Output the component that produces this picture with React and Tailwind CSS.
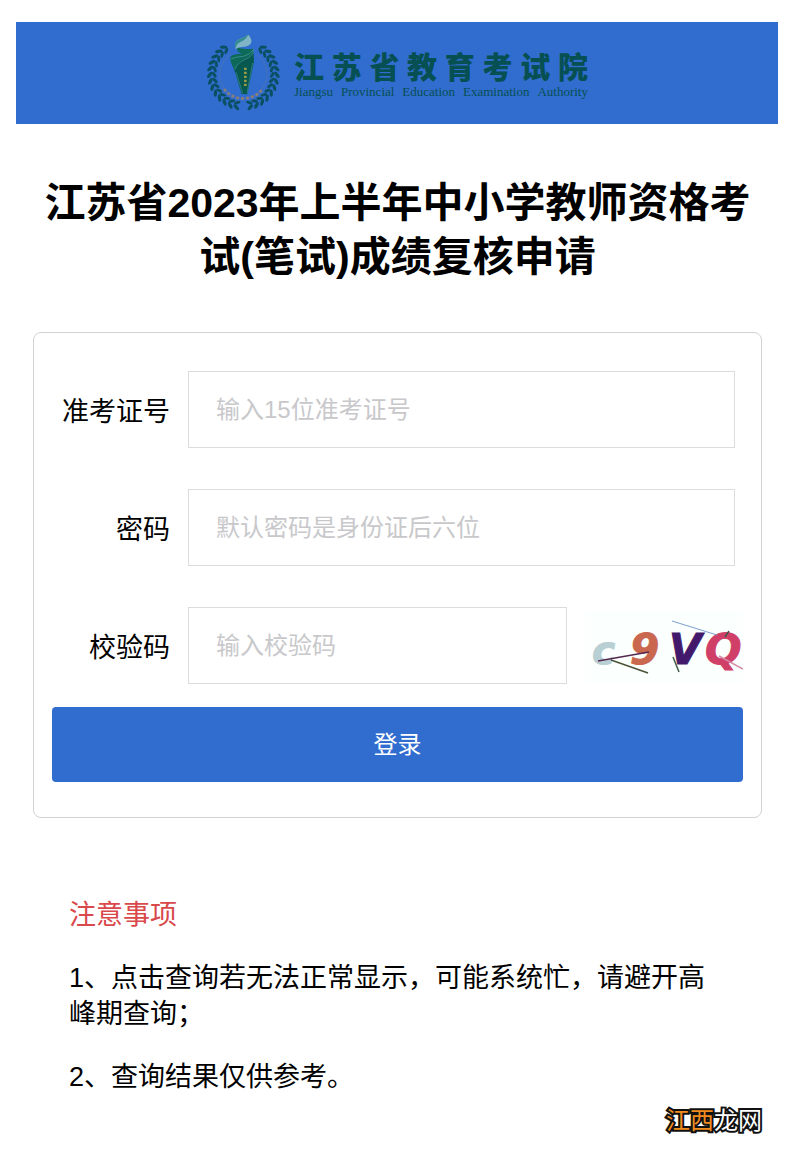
import React, { useState } from "react";

// angles (degrees from the top) of the wreath leaves on one side
const leaves = [36, 47, 58, 69, 80, 91, 102, 113, 124, 135, 146, 157, 168];

function Wreath() {
   return (
      <g fill="#0b4f63">
         {leaves.map((a) => (
            <g key={a} transform={`rotate(${a})`}>
               <ellipse cx="0" cy="-101" rx="11" ry="5" transform="rotate(-38 0 -101)" />
               <ellipse cx="0" cy="-87" rx="10" ry="4.5" transform="rotate(32 0 -87)" />
            </g>
         ))}
      </g>
   );
}

function Emblem() {
   return (
      <svg className="w-[90px] h-[90px] shrink-0" viewBox="0 0 270 270" aria-hidden="true">
         <g transform="translate(130 139)">
            <Wreath />
            <g transform="scale(-1 1)">
               <Wreath />
            </g>
            <path d="M-38 -60A71 71 0 1 0 38 -60" fill="none" stroke="#5b78a8" strokeWidth="5" strokeDasharray="3 4" opacity="0.7" />
            <path d="M-58 44A73 73 0 0 0 58 44" fill="none" stroke="#8a7d78" strokeWidth="8" strokeDasharray="9 6" />
         </g>
         {/* torch */}
         <path d="M90 88Q96 110 105 132L125 198L142 199L162 100L160 66Q135 84 90 88Z" fill="#07584f" />
         <path d="M111 58Q130 66 160 62Q162 82 134 92Q108 101 105 126Q88 101 92 87Q94 78 126 77Q108 72 111 58Z" fill="#0d6a58" />
         <path d="M92 93Q108 86 130 85Q150 80 160 65Q162 83 136 94Q111 104 105 124" fill="none" stroke="#4f9aa8" strokeWidth="2" />
         <path d="M108 133L128 196M158 105L141 196" stroke="#3d8f98" strokeWidth="2" fill="none" />
         <path d="M145 20Q156 32 154 43Q150 56 127 57Q112 58 107 64Q99 44 117 34Q132 28 145 20Z" fill="#7fb5c6" />
         <path d="M145 20Q138 34 121 42Q107 49 107 64Q99 43 117 34Q132 28 145 20Z" fill="#348b93" />
         <path d="M136 119V174" stroke="#9a9a48" strokeWidth="8" strokeDasharray="7 5" />
      </svg>
   );
}

function Captcha() {
   return (
      <svg className="w-full h-[72px]" viewBox="0 0 158 72" role="img" aria-label="校验码图片">
         <rect width="158" height="72" fill="#fbfffd" />
         <g fontFamily="DejaVu Sans" fontWeight="bold" fontStyle="italic">
            <text x="7" y="54" fontSize="39" fill="#b8cfd3" stroke="#b8cfd3">c</text>
            <text x="45" y="54" fontSize="42" fill="#c9674f" stroke="#c9674f">9</text>
            <text x="84" y="54" fontSize="42" fill="#42196b" stroke="#42196b">V</text>
            <text x="120" y="54" fontSize="43" fill="#cf3f68" stroke="#cf3f68">Q</text>
         </g>
         <path d="M13 51L64 42" stroke="#54284f" strokeWidth="1.5" />
         <path d="M26 50L63 63" stroke="#4c5138" strokeWidth="1.5" />
         <path d="M87 11L132 25" stroke="#7f9fd0" strokeWidth="1" />
         <path d="M88 47L94 62M140 27L144 21" stroke="#3f5a45" strokeWidth="1.5" />
         <path d="M134 46L158 59" stroke="#d58aa5" strokeWidth="1.5" />
      </svg>
   );
}

const inputClass =
   "h-[77px] min-w-0 flex-1 border border-[#dcdcdc] bg-white px-[27px] text-2xl text-black placeholder:text-[#c8c8cb] outline-none";
const labelClass = "w-[118px] shrink-0 pt-1 text-right";

function App() {
   const [ticket, setTicket] = useState("");
   const [password, setPassword] = useState("");
   const [code, setCode] = useState("");

   return (
      <div className="bg-white pt-[22px] pl-4 pr-[22px] font-['Liberation_Sans','Noto_Sans_CJK_SC',sans-serif] text-[27px] leading-[36px] text-black">
         <header className="flex h-[102px] items-center justify-center bg-[#316dcf] pr-1.5">
            <Emblem />
            <div className="ml-1 w-[294px] pt-1.5 text-[#064f52]">
               <div className="flex justify-between text-[30px] leading-[32px] font-black">
                  {[..."江苏省教育考试院"].map((c) => (
                     <span key={c}>{c}</span>
                  ))}
               </div>
               <div className="flex justify-between font-['Liberation_Serif',serif] text-[13px] leading-[16px]">
                  {"Jiangsu Provincial Education Examination Authority".split(" ").map((w) => (
                     <span key={w}>{w}</span>
                  ))}
               </div>
            </div>
         </header>

         <main className="pl-[17px] pr-4">
            <h1 className="mt-[52px] text-center text-[41px] leading-[54px] font-bold">
               江苏省2023年上半年中小学教师资格考试(笔试)成绩复核申请
            </h1>

            <form
               className="mt-12 rounded-lg border border-[#d2d2d2] px-[18px] pt-[38px] pb-[35px]"
               onSubmit={(e) => e.preventDefault()}
            >
               <div className="flex flex-col gap-[41px]">
                  <div className="flex items-center gap-[18px] pr-2">
                     <label htmlFor="ticket" className={labelClass}>准考证号</label>
                     <input id="ticket" type="text" className={inputClass} placeholder="输入15位准考证号" value={ticket} onChange={(e) => setTicket(e.target.value)} />
                  </div>
                  <div className="flex items-center gap-[18px] pr-2">
                     <label htmlFor="password" className={labelClass}>密码</label>
                     <input id="password" type="password" className={inputClass} placeholder="默认密码是身份证后六位" value={password} onChange={(e) => setPassword(e.target.value)} />
                  </div>
                  <div className="flex items-center gap-[18px]">
                     <label htmlFor="code" className={labelClass}>校验码</label>
                     <input id="code" type="text" className={inputClass} placeholder="输入校验码" value={code} onChange={(e) => setCode(e.target.value)} />
                     <div className="w-[158px] shrink-0">
                        <Captcha />
                     </div>
                  </div>
               </div>
               <button type="submit" className="mt-[23px] h-[75px] w-full rounded-sm bg-[#316dcf] text-2xl text-white">
                  登录
               </button>
            </form>

            <section className="mt-[79px] px-9">
               <h2 className="text-[#d9484a]">注意事项</h2>
               <p className="mt-[27px]">1、点击查询若无法正常显示，可能系统忙，请避开高峰期查询；</p>
               <p className="mt-[27px]">2、查询结果仅供参考。</p>
            </section>
         </main>

         <footer className="mt-2 flex justify-end pr-4 text-2xl leading-[36px] [-webkit-text-stroke:4px_#111] [paint-order:stroke_fill]">
            <span className="text-[#f08c1e]">江西</span>
            <span className="text-white">龙网</span>
         </footer>
      </div>
   );
}

export default App;
